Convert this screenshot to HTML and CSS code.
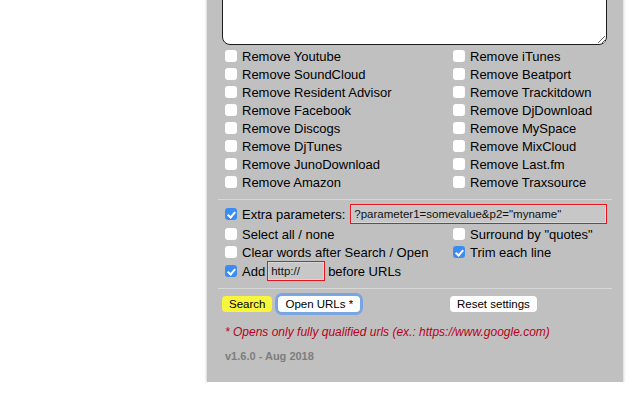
FILE: index.html
```html
<!DOCTYPE html>
<html>
<head>
<meta charset="utf-8">
<link rel="stylesheet" href="styles.css">
</head>
<body>
<div class="panel">
  <textarea class="words"></textarea>
  <div class="cols sites">
    <label class="opt"><input type="checkbox"><span>Remove Youtube</span></label>
    <label class="opt"><input type="checkbox"><span>Remove iTunes</span></label>
    <label class="opt"><input type="checkbox"><span>Remove SoundCloud</span></label>
    <label class="opt"><input type="checkbox"><span>Remove Beatport</span></label>
    <label class="opt"><input type="checkbox"><span>Remove Resident Advisor</span></label>
    <label class="opt"><input type="checkbox"><span>Remove Trackitdown</span></label>
    <label class="opt"><input type="checkbox"><span>Remove Facebook</span></label>
    <label class="opt"><input type="checkbox"><span>Remove DjDownload</span></label>
    <label class="opt"><input type="checkbox"><span>Remove Discogs</span></label>
    <label class="opt"><input type="checkbox"><span>Remove MySpace</span></label>
    <label class="opt"><input type="checkbox"><span>Remove DjTunes</span></label>
    <label class="opt"><input type="checkbox"><span>Remove MixCloud</span></label>
    <label class="opt"><input type="checkbox"><span>Remove JunoDownload</span></label>
    <label class="opt"><input type="checkbox"><span>Remove Last.fm</span></label>
    <label class="opt"><input type="checkbox"><span>Remove Amazon</span></label>
    <label class="opt"><input type="checkbox"><span>Remove Traxsource</span></label>
  </div>
  <div class="sep"></div>
  <div class="cols settings">
    <div class="opt tall full">
      <input type="checkbox" checked><span>Extra parameters:</span>
      <input type="text" class="field extra" value='?parameter1=somevalue&amp;p2="myname"'>
    </div>
    <label class="opt first"><input type="checkbox"><span>Select all / none</span></label>
    <label class="opt first"><input type="checkbox"><span>Surround by "quotes"</span></label>
    <label class="opt"><input type="checkbox"><span>Clear words after Search / Open</span></label>
    <label class="opt"><input type="checkbox" checked><span>Trim each line</span></label>
    <div class="opt tall full add">
      <input type="checkbox" checked><span>Add</span>
      <input type="text" class="field prefix" value="http://">
      <span>before URLs</span>
    </div>
  </div>
  <div class="sep lower"></div>
  <div class="cols buttons">
    <div class="btn-group">
      <button class="btn search">Search</button>
      <button class="btn open">Open URLs *</button>
    </div>
    <div><button class="btn reset">Reset settings</button></div>
  </div>
  <p class="note">* Opens only fully qualified urls (ex.: https://www.google.com)</p>
  <p class="version">v1.6.0 - Aug 2018</p>
</div>
</body>
</html>
```

FILE: styles.css
```css
html, body {
  margin: 0;
  padding: 0;
  background: #fff;
}

body {
  font-family: "Liberation Sans", Arial, sans-serif;
  font-size: 13px;
  color: #000;
}

.panel {
  width: 416px;
  box-sizing: border-box;
  margin: -60px 0 0 207px;
  padding: 8px 16px 19px 15px;
  background: #c0c0c0;
  border-bottom: 1px solid #fff;
  box-shadow: 0 0 3px rgba(0, 0, 0, 0.28);
}

.words {
  display: block;
  box-sizing: border-box;
  width: 385px;
  height: 97px;
  margin: 0 0 2px 0;
  border: 1px solid #1c1c1c;
  border-radius: 8px;
  background: #fff;
  resize: both;
  outline: none;
}

.cols {
  display: grid;
  grid-template-columns: 228px 1fr;
}

.opt {
  display: flex;
  align-items: center;
  height: 18px;
  padding-left: 3px;
  white-space: nowrap;
}

.opt.tall {
  height: 20px;
}

.opt.full {
  grid-column: 1 / 3;
}

.opt.first {
  margin-top: 1px;
}

.opt input[type="checkbox"] {
  -webkit-appearance: none;
  appearance: none;
  position: relative;
  width: 12px;
  height: 12px;
  margin: 0 5px 0 0;
  flex: none;
  border-radius: 3px;
  background: #fff;
}

.opt input[type="checkbox"]:checked {
  background: #3a8cf2;
}

.opt input[type="checkbox"]:checked::after {
  content: "";
  position: absolute;
  left: 4px;
  top: 1.5px;
  width: 2.5px;
  height: 6px;
  border-right: 2px solid #fff;
  border-bottom: 2px solid #fff;
  transform: rotate(40deg);
}

.sep {
  height: 1px;
  background: #d8d8d8;
  margin: 8px -5px 4px -4px;
}

.sep.lower {
  margin: 7px -5px 7px -4px;
}

.field {
  box-sizing: border-box;
  height: 20px;
  padding: 0 3px;
  border: 1px solid #e8141c;
  box-shadow: inset 0 0 0 1px #d6d6d6;
  background: #c7c7c7;
  font-family: "Liberation Sans", Arial, sans-serif;
  font-size: 11.5px;
  color: #111;
  outline: none;
}

.extra {
  width: 261px;
  margin-left: 5px;
}

.add .prefix {
  width: 58px;
  height: 20px;
  margin: 0 3px 0 2px;
}

.buttons {
  align-items: center;
}

.btn-group {
  display: flex;
  gap: 6px;
}

.btn {
  height: 16px;
  padding: 0 7px;
  border: none;
  border-radius: 4px;
  background: #fff;
  font-family: "Liberation Sans", Arial, sans-serif;
  font-size: 11.5px;
  color: #000;
  line-height: 16px;
}

.btn.search {
  background: #f8f53e;
}

.btn.open {
  box-shadow: 0 0 0 3px #79a5e0;
}

.note {
  margin: 13px 0 0 3px;
  line-height: 15px;
  font-style: italic;
  font-size: 12px;
  color: #b8001a;
}

.version {
  margin: 10px 0 0 3px;
  line-height: 13px;
  font-size: 11px;
  font-weight: bold;
  color: #7d7d7d;
}
```
